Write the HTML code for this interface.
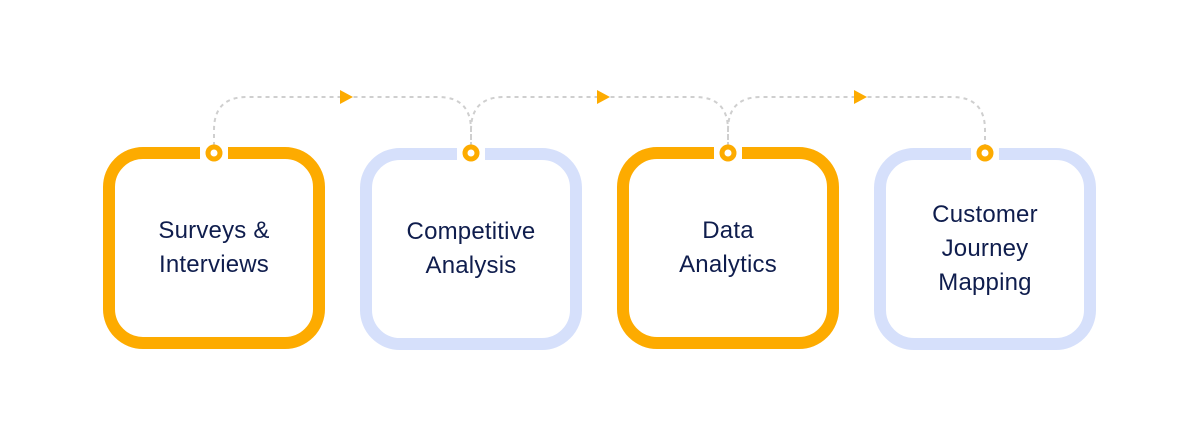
<!DOCTYPE html>
<html><head><style>
body{margin:0;width:1200px;height:437px;background:#fff;position:relative;overflow:hidden;font-family:"Liberation Sans",sans-serif}
.b{position:absolute;top:147px;width:198px;height:178px;border:12px solid;border-radius:40px;display:flex;align-items:center;justify-content:center;text-align:center;color:#0f1d4d;font-size:24px;line-height:34px;letter-spacing:0.2px}
.o{border-color:#fdab00}.l{border-color:#d6e0fb}
</style></head><body>
<div class="b o" style="left:103px">Surveys &amp;<br>Interviews</div>
<div class="b l" style="left:360px;top:148px">Competitive<br>Analysis</div>
<div class="b o" style="left:617px">Data<br>Analytics</div>
<div class="b l" style="left:874px;top:148px">Customer<br>Journey<br>Mapping</div>
<svg width="1200" height="437" style="position:absolute;left:0;top:0">
<g fill="none" stroke="#cfcfcf" stroke-width="2" stroke-dasharray="4 4">
<path d="M214 146 V130 Q214 97 247 97 H438 Q471 97 471 130 V146"/>
<path d="M471 146 V130 Q471 97 504 97 H695 Q728 97 728 130 V146"/>
<path d="M728 146 V130 Q728 97 761 97 H952 Q985 97 985 130 V146"/>
</g>
<g fill="#fdab00">
<path d="M340 90 L353 97 L340 104 Z"/>
<path d="M597 90 L610 97 L597 104 Z"/>
<path d="M854 90 L867 97 L854 104 Z"/>
</g>
<g fill="#fff"><rect x="200" y="145" width="28" height="16"/><rect x="457" y="146" width="28" height="16"/><rect x="714" y="145" width="28" height="16"/><rect x="971" y="146" width="28" height="16"/></g>
<g fill="#fff" stroke="#fdab00" stroke-width="5">
<circle cx="214" cy="153" r="6"/><circle cx="471" cy="153" r="6"/><circle cx="728" cy="153" r="6"/><circle cx="985" cy="153" r="6"/>
</g>
</svg>
</body></html>
